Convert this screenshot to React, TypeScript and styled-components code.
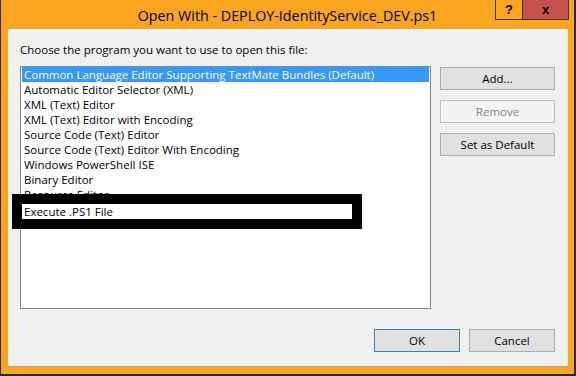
import styled, { createGlobalStyle } from "styled-components";

const GlobalStyle = createGlobalStyle`
  html, body {
    margin: 0;
    padding: 0;
    background: #2b2b2b;
  }
  * {
    box-sizing: border-box;
  }
`;

const programs = [
  "Common Language Editor Supporting TextMate Bundles (Default)",
  "Automatic Editor Selector (XML)",
  "XML (Text) Editor",
  "XML (Text) Editor with Encoding",
  "Source Code (Text) Editor",
  "Source Code (Text) Editor With Encoding",
  "Windows PowerShell ISE",
  "Binary Editor",
  "Resource Editor",
  "Execute .PS1 File",
];

const uiFont = `"Open Sans", "Noto Sans", sans-serif`;

const Window = styled.div`
  width: 576px;
  height: 376px;
  display: flex;
  flex-direction: column;
  background: #f9a51e;
  border-left: 1px solid #2b2b2b;
  border-right: 2px solid #2b2b2b;
  border-bottom: 2px solid #2b2b2b;
  font-family: ${uiFont};
  color: #000;
`;

const TitleBar = styled.div`
  height: 29px;
  display: grid;
  grid-template-columns: 1fr auto 1fr;
  align-items: start;
`;

const Title = styled.div`
  grid-column: 2;
  font-size: 14.3px;
  line-height: 29px;
  padding-top: 1px;
  white-space: nowrap;
`;

const Controls = styled.div`
  grid-column: 3;
  justify-self: end;
  display: flex;
  margin-right: 5px;
`;

const ControlButton = styled.div<{ $close?: boolean; $w: number }>`
  width: ${(p) => p.$w}px;
  height: 20px;
  display: flex;
  align-items: center;
  justify-content: center;
  background: ${(p) => (p.$close ? "#c75050" : "transparent")};
  border: 1px solid #3a3a3a;
  border-top: none;
  border-left-width: ${(p) => (p.$close ? 0 : 1)}px;
  font-family: "Liberation Sans", Arial, sans-serif;
  font-weight: bold;
  font-size: 13px;
  color: #000;
`;

const Client = styled.div`
  flex: 1;
  margin: 0 6px 7px 7px;
  background: #f0f0f0;
  border-bottom: 1px solid #a8a8a8;
  display: flex;
  flex-direction: column;
  padding: 13px 13px 14px 12px;
  font-size: 11.5px;
`;

const Prompt = styled.div`
  line-height: 16px;
  margin-bottom: 8px;
`;

const Main = styled.div`
  display: flex;
  gap: 9px;
  align-items: flex-start;
`;

const ListWrap = styled.div`
  position: relative;
`;

const ListBox = styled.div`
  width: 411px;
  height: 243px;
  background: #fff;
  border: 1px solid #828790;
  padding: 0 1px;
`;

const Row = styled.div<{ $selected?: boolean }>`
  height: 15px;
  line-height: 15px;
  padding-left: 2px;
  white-space: nowrap;
  overflow: hidden;
  background: ${(p) => (p.$selected ? "#3399ff" : "transparent")};
  color: ${(p) => (p.$selected ? "#fff" : "#000")};
`;

const Redaction = styled.div`
  position: absolute;
  left: -8px;
  top: 128px;
  width: 350px;
  height: 35px;
  border: 10px solid #000;
  background: #fff;
  line-height: 15px;
  padding-left: 2px;
`;

const SideButtons = styled.div`
  display: flex;
  flex-direction: column;
  gap: 10px;
  padding-top: 1px;
`;

const Button = styled.div<{ $disabled?: boolean; $default?: boolean; $w?: number }>`
  width: ${(p) => p.$w ?? 115}px;
  height: 23px;
  display: flex;
  align-items: center;
  justify-content: center;
  background: ${(p) => (p.$disabled ? "#f4f4f4" : "#e1e1e1")};
  border: 1px solid
    ${(p) => (p.$disabled ? "#bfbfbf" : p.$default ? "#3c7fb1" : "#adadad")};
  color: ${(p) => (p.$disabled ? "#838383" : "#000")};
`;

const Footer = styled.div`
  margin-top: auto;
  display: flex;
  justify-content: flex-end;
  gap: 9px;
`;

export default function App() {
  return (
    <>
      <GlobalStyle />
      <Window>
        <TitleBar>
          <Title>Open With - DEPLOY-IdentityService_DEV.ps1</Title>
          <Controls>
            <ControlButton $w={28}>?</ControlButton>
            <ControlButton $w={46} $close>
              x
            </ControlButton>
          </Controls>
        </TitleBar>
        <Client>
          <Prompt>Choose the program you want to use to open this file:</Prompt>
          <Main>
            <ListWrap>
              <ListBox>
                {programs.slice(0, 9).map((name, i) => (
                  <Row key={name} $selected={i === 0}>
                    {name}
                  </Row>
                ))}
              </ListBox>
              <Redaction>{programs[9]}</Redaction>
            </ListWrap>
            <SideButtons>
              <Button>Add...</Button>
              <Button $disabled>Remove</Button>
              <Button>Set as Default</Button>
            </SideButtons>
          </Main>
          <Footer>
            <Button $w={86} $default>
              OK
            </Button>
            <Button $w={86}>Cancel</Button>
          </Footer>
        </Client>
      </Window>
    </>
  );
}
